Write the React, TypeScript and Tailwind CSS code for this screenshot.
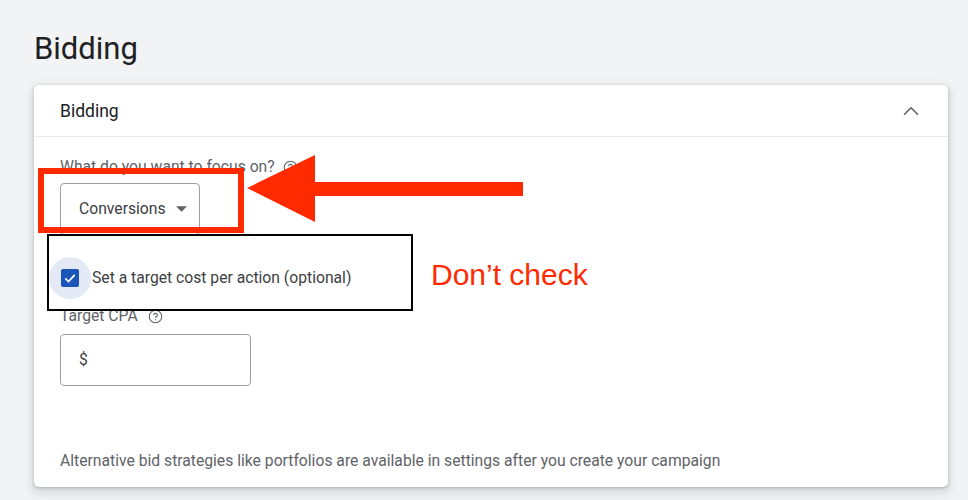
import { ChevronUp, CircleHelp } from "lucide-react";

function HelpIcon() {
  return <CircleHelp size={15} strokeWidth={1.75} className="text-[#5f6368]" />;
}

function Caret() {
  return (
    <svg width="11" height="6" viewBox="0 0 10 5" className="ml-[10px]">
      <path d="M0 0 L10 0 L5 5 Z" fill="#5f6368" />
    </svg>
  );
}

function Annotations() {
  return (
    <>
      <div className="absolute left-[38px] top-[168px] h-[65px] w-[206px] border-[6px] border-[#ff2a00]" />
      <svg
        className="absolute left-[247px] top-[155px]"
        width="276"
        height="67"
        viewBox="0 0 276 67"
      >
        <polygon
          points="0,33 68,0 68,27 276,27 276,41 68,41 68,67"
          fill="#ff2a00"
        />
      </svg>
      <div className="absolute left-[47px] top-[234px] h-[77px] w-[366px] border-2 border-black" />
      <div className="absolute left-[431px] top-[256px] font-['Liberation_Sans',sans-serif] text-[30px] leading-[38px] text-[#ff2a00]">
        Don’t check
      </div>
    </>
  );
}

export default function App() {
  return (
    <div className="relative h-[500px] w-[968px] overflow-hidden bg-[#f1f3f4] pt-[30px] font-['Roboto',sans-serif]">
      <h1 className="ml-[34px] text-[31px] leading-[38px] font-normal text-[#202124]">Bidding</h1>

      <section className="ml-[34px] mt-[17px] w-[914px] rounded-[5px] bg-white shadow-[0_1px_3px_rgba(60,64,67,0.3),0_4px_8px_3px_rgba(60,64,67,0.12)]">
        <header className="flex h-[52px] items-center justify-between border-b border-[#e8eaed] px-[26px]">
          <h2 className="text-[17.5px] leading-[24px] text-[#202124]">Bidding</h2>
          <ChevronUp size={26} strokeWidth={1.5} className="-mr-[2px] text-[#5f6368]" />
        </header>

        <div className="px-[26px] pb-[16px] pt-[20px] text-[15.7px]">
          <div className="flex items-center gap-2 leading-[20px] text-[#5f6368]">
            <span>What do you want to focus on?</span>
            <HelpIcon />
          </div>

          <button
            type="button"
            className="mt-[6px] flex h-[52px] w-[140px] items-center rounded-[4px] border border-[#9aa0a6] pl-[18px] text-[#3c4043]"
          >
            Conversions
            <Caret />
          </button>

          <label className="mt-[22px] flex h-[42px] items-center">
            <span className="-ml-[11px] flex h-[42px] w-[42px] items-center justify-center rounded-full bg-[#e3eaf6]">
              <span className="flex h-[18px] w-[18px] items-center justify-center rounded-[2px] bg-[#1a55b8]">
                <svg width="14" height="14" viewBox="0 0 24 24">
                  <path
                    d="M4 12.5 L9.5 18 L20 6.5"
                    fill="none"
                    stroke="white"
                    strokeWidth="3"
                  />
                </svg>
              </span>
            </span>
            <span className="ml-[1px] leading-[20px] text-[#3c4043]">
              Set a target cost per action (optional)
            </span>
          </label>

          <div className="mt-[7px] flex items-center gap-[10px] leading-[20px] text-[#5f6368]">
            <span>Target CPA</span>
            <HelpIcon />
          </div>

          <div className="mt-[8px] flex h-[52px] w-[191px] items-center rounded-[4px] border border-[#9aa0a6] pl-[18px] text-[#3c4043]">
            $
          </div>

          <p className="mt-[65px] leading-[20px] text-[#5f6368]">
            Alternative bid strategies like portfolios are available in settings after you create your campaign
          </p>
        </div>
      </section>

      <Annotations />
    </div>
  );
}
